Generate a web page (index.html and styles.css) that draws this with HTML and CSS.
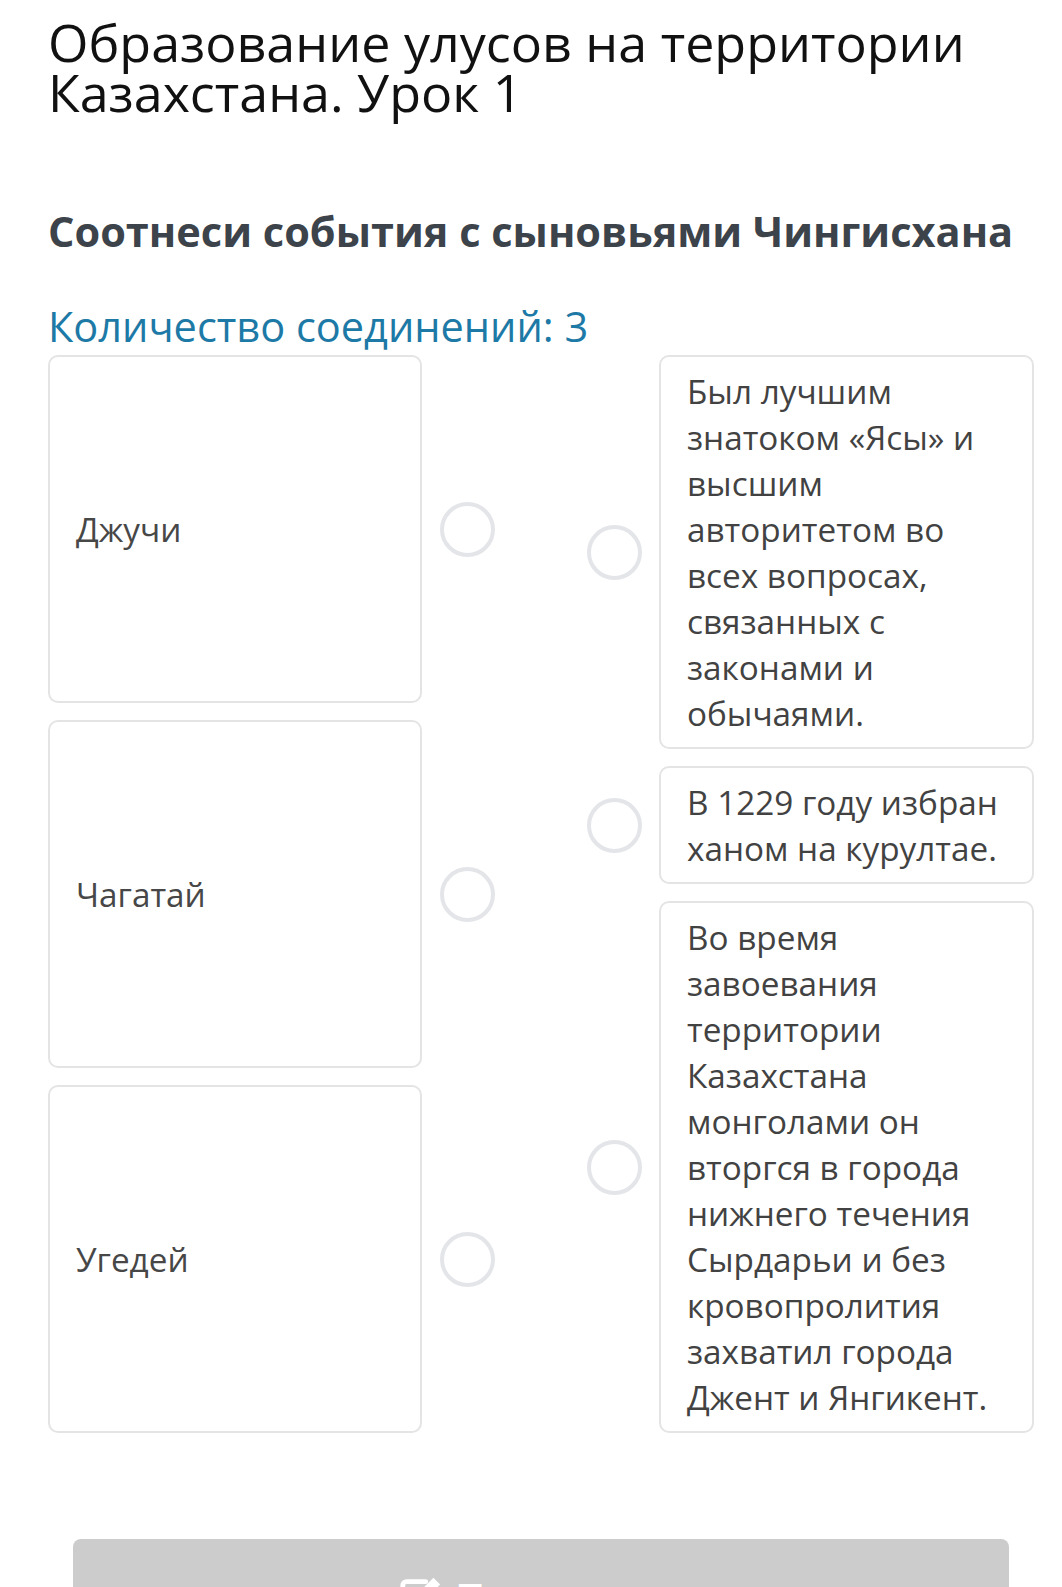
FILE: index.html
```html
<!DOCTYPE html>
<html lang="ru">
<head>
<meta charset="UTF-8">
<meta name="viewport" content="width=device-width, initial-scale=1.0">
<title>Образование улусов на территории Казахстана. Урок 1</title>
<link rel="stylesheet" href="styles.css">
</head>
<body>

<div class="page">
    <h1 class="title">Образование улусов на территории Казахстана. Урок 1</h1>

    <h2 class="task">Соотнеси события с сыновьями Чингисхана</h2>

    <div class="count">Количество соединений: 3</div>

    <div class="match">
        <div class="col col-left">
            <div class="item">
                <div class="card">Джучи</div>
                <span class="dot"></span>
            </div>
            <div class="item">
                <div class="card">Чагатай</div>
                <span class="dot"></span>
            </div>
            <div class="item">
                <div class="card">Угедей</div>
                <span class="dot"></span>
            </div>
        </div>

        <div class="col col-right">
            <div class="item">
                <span class="dot"></span>
                <div class="card">Был лучшим знатоком «Ясы» и высшим авторитетом во всех вопросах, связанных с законами и обычаями.</div>
            </div>
            <div class="item">
                <span class="dot"></span>
                <div class="card">В 1229 году избран ханом на курултае.</div>
            </div>
            <div class="item">
                <span class="dot"></span>
                <div class="card">Во время завоевания территории Казахстана монголами он вторгся в города нижнего течения Сырдарьи и без кровопролития захватил города Джент и Янгикент.</div>
            </div>
        </div>
    </div>

    <button class="check" type="button">
        <svg class="check-icon" viewBox="0 0 48 48" width="46" height="46">
            <path d="M30 8H10a4 4 0 0 0-4 4v26a4 4 0 0 0 4 4h26a4 4 0 0 0 4-4V22" fill="none" stroke="#fff" stroke-width="5" stroke-linecap="round"/>
            <path d="M38 4l7 7-18 18-9 2 2-9z" fill="#fff"/>
        </svg>
        <span>Проверить</span>
    </button>
</div>

</body>
</html>
```

FILE: styles.css
```css
body {
    margin: 0;
    background-color: #fff;
    font-family: 'Open Sans', 'Noto Sans', sans-serif;
}

.page {
    padding: 17px 27px 40px 48px;
}

.title {
    margin: 0;
    font-size: 52px;
    font-weight: 400;
    line-height: 50px;
    color: #111;
}

.task {
    margin: 89px 0 0;
    font-size: 41.5px;
    font-weight: 700;
    line-height: 50px;
    color: #3d434a;
}

.count {
    margin-top: 46px;
    font-size: 41.5px;
    line-height: 48px;
    color: #1d79a6;
}

.match {
    display: flex;
    justify-content: space-between;
    margin-top: 5px;
}

.col {
    display: flex;
    flex-direction: column;
    gap: 17px;
    width: 447px;
}

.col-right {
    width: 448px;
}

.item {
    display: flex;
    align-items: center;
    gap: 17px;
}

.col-left .item {
    flex: 1;
    gap: 18px;
}

.card {
    box-sizing: border-box;
    flex: 0 0 375px;
    border: 2px solid #e4e4e4;
    border-radius: 10px;
    padding: 11px 26px;
    font-size: 33.3px;
    line-height: 46px;
    color: #424242;
}

.col-left .card {
    flex-basis: 374px;
    align-self: stretch;
    display: flex;
    align-items: center;
    color: #474747;
}

.dot {
    box-sizing: border-box;
    flex: 0 0 55px;
    width: 55px;
    height: 55px;
    border: 4px solid #e3e5e8;
    border-radius: 50%;
}

.check {
    display: flex;
    justify-content: center;
    align-items: center;
    gap: 12px;
    width: 936px;
    margin: 106px 0 0 25px;
    padding: 34px 0;
    border: none;
    border-radius: 8px;
    background-color: #cccccc;
    color: #fff;
    font-family: 'Open Sans', 'Noto Sans', sans-serif;
    font-size: 40px;
    font-weight: 700;
    line-height: 48px;
}
```
